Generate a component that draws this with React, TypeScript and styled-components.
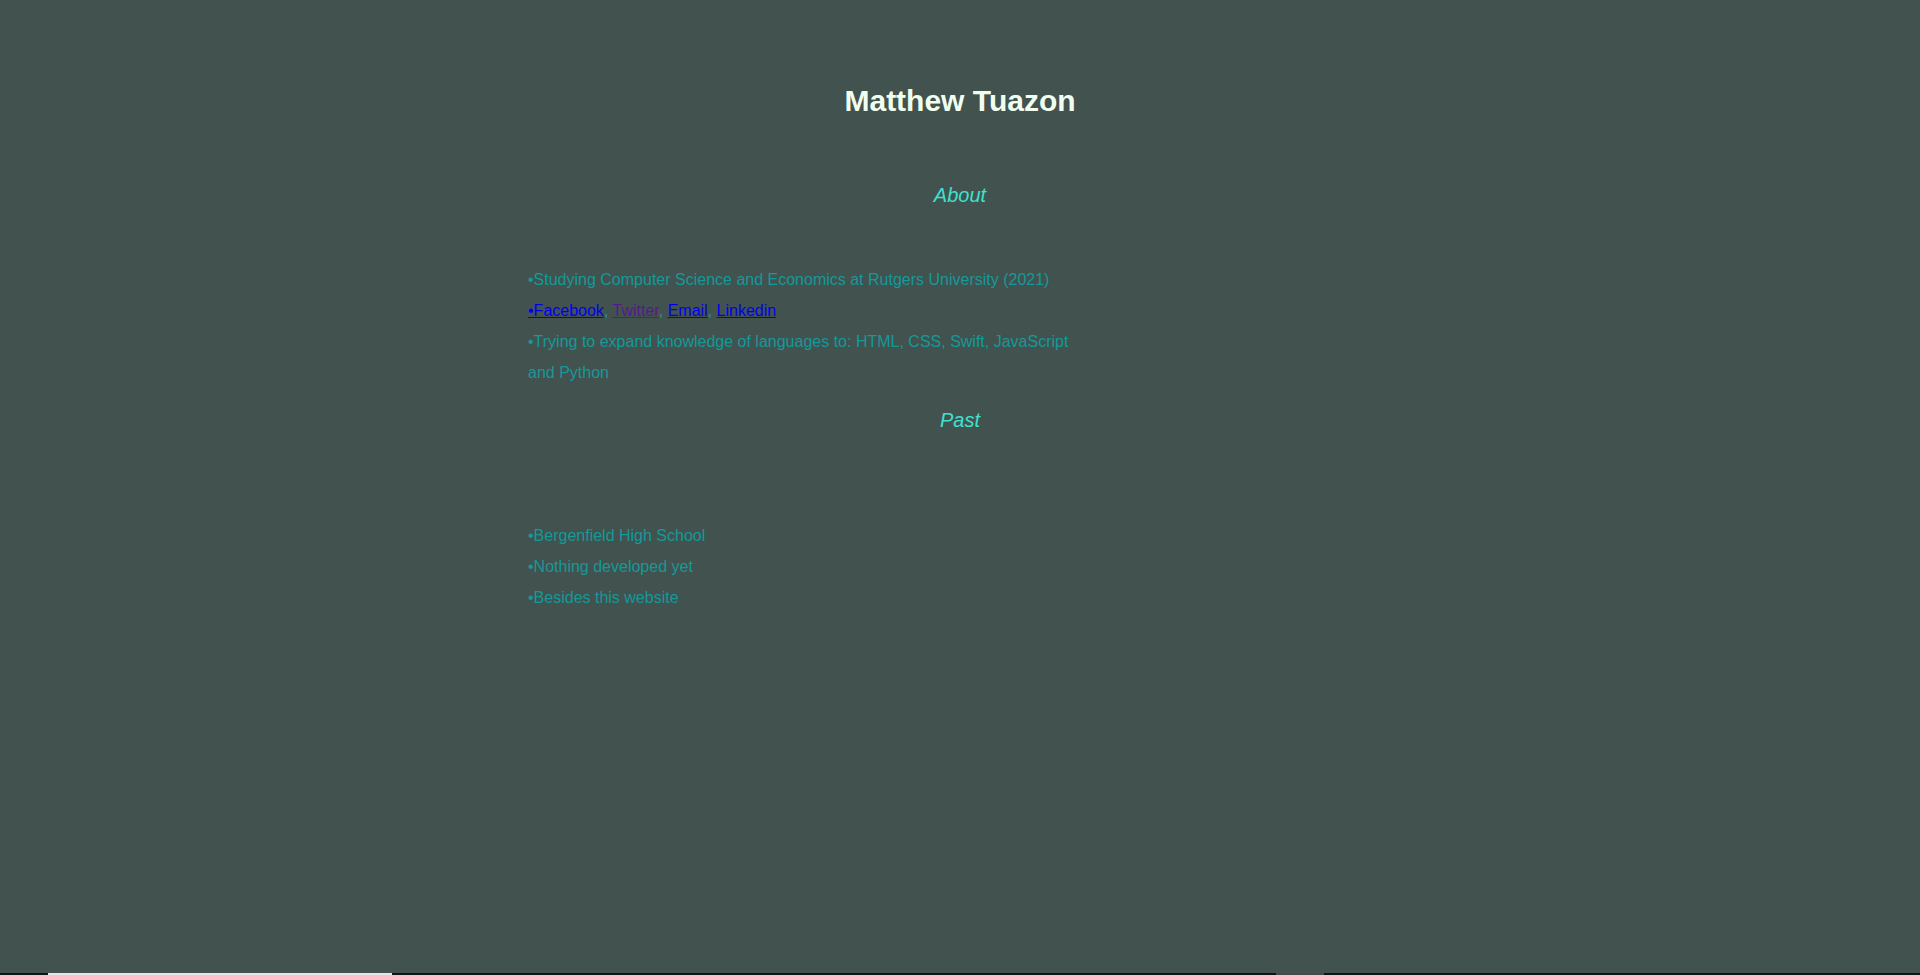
import React from "react";
import styled, { createGlobalStyle } from "styled-components";

const Global = createGlobalStyle`
  html, body {
    margin: 0;
    padding: 0;
    background: #42524e;
  }
  body {
    font-family: "Liberation Sans", Arial, sans-serif;
    min-height: 975px;
  }
`;

const Page = styled.main`
  display: flex;
  flex-direction: column;
  padding-top: 82px;
  min-height: 975px;
  box-sizing: border-box;
`;

const Title = styled.h1`
  margin: 0;
  text-align: center;
  font-size: 30px;
  font-weight: bold;
  line-height: 38px;
  color: #f0fff0;
`;

const SectionHeading = styled.h2<{ $top: number }>`
  margin: ${(p) => p.$top}px 0 0;
  text-align: center;
  font-size: 20px;
  font-style: italic;
  font-weight: normal;
  line-height: 24px;
  color: #40e0d0;
`;

const Column = styled.div<{ $top: number }>`
  margin: ${(p) => p.$top}px 0 0 528px;
  width: 560px;
  font-size: 16px;
  line-height: 31px;
  color: #14999a;
`;

const Line = styled.div``;

const Link = styled.a<{ $visited?: boolean }>`
  color: ${(p) => (p.$visited ? "#551a8b" : "#0000ee")};
  text-decoration: underline;
`;

const BottomBar = styled.div`
  position: fixed;
  left: 0;
  right: 0;
  bottom: 0;
  height: 2px;
  display: flex;
  background: #0b1615;
`;

const Seg = styled.div<{ $w: number; $c?: string }>`
  flex: 0 0 ${(p) => p.$w}px;
  background: ${(p) => p.$c ?? "transparent"};
`;

export default function App() {
  return (
    <>
      <Global />
      <Page>
        <Title>Matthew Tuazon</Title>
        <SectionHeading $top={63}>About</SectionHeading>
        <Column $top={57}>
          <Line>•Studying Computer Science and Economics at Rutgers University (2021)</Line>
          <Line>
            <Link href="#">•Facebook</Link>, <Link href="#" $visited>Twitter</Link>,{" "}
            <Link href="#">Email</Link>, <Link href="#">Linkedin</Link>
          </Line>
          <Line>
            •Trying to expand knowledge of languages to: HTML, CSS, Swift, JavaScript and Python
          </Line>
        </Column>
        <SectionHeading $top={20}>Past</SectionHeading>
        <Column $top={88}>
          <Line>•Bergenfield High School</Line>
          <Line>•Nothing developed yet</Line>
          <Line>•Besides this website</Line>
        </Column>
      </Page>
      <BottomBar>
        <Seg $w={48} />
        <Seg $w={344} $c="#e6e6e6" />
        <Seg $w={884} />
        <Seg $w={48} $c="#4a4a4a" />
      </BottomBar>
    </>
  );
}
